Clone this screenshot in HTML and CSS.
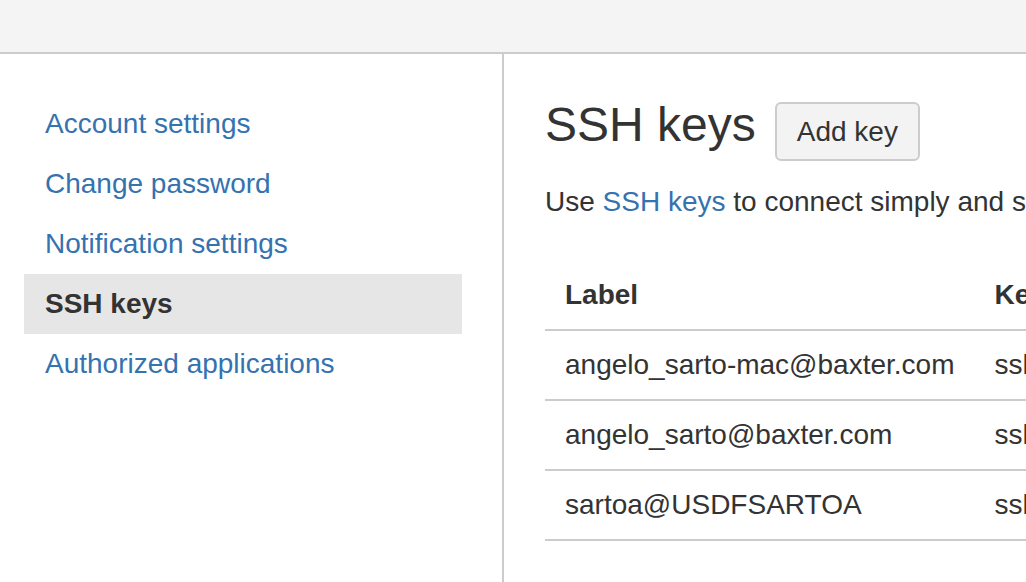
FILE: index.html
```html
<!DOCTYPE html>
<html lang="en">
<head>
<meta charset="utf-8">
<title>SSH keys</title>
<link rel="stylesheet" href="styles.css">
</head>
<body>
<header class="topbar"></header>
<div class="layout">
  <aside class="sidebar">
    <nav class="nav">
      <a class="nav-item" href="#">Account settings</a>
      <a class="nav-item" href="#">Change password</a>
      <a class="nav-item" href="#">Notification settings</a>
      <a class="nav-item active" href="#">SSH keys</a>
      <a class="nav-item" href="#">Authorized applications</a>
    </nav>
  </aside>
  <main class="content">
    <div class="title-row">
      <h1 class="title">SSH keys</h1>
      <button class="btn" type="button">Add key</button>
    </div>
    <p class="intro">Use <a href="#">SSH keys</a> to connect simply and securely to repositories without using passwords.</p>
    <table class="keys">
      <thead>
        <tr><th class="col-label">Label</th><th>Key</th></tr>
      </thead>
      <tbody>
        <tr><td class="col-label">angelo_sarto-mac@baxter.com</td><td>ssh-rsa AAAAB3NzaC1yc2EAAAADAQABAAABAQ</td></tr>
        <tr><td class="col-label">angelo_sarto@baxter.com</td><td>ssh-rsa AAAAB3NzaC1yc2EAAAADAQABAAABAQ</td></tr>
        <tr><td class="col-label">sartoa@USDFSARTOA</td><td>ssh-rsa AAAAB3NzaC1yc2EAAAADAQABAAABAQ</td></tr>
      </tbody>
    </table>
  </main>
</div>
</body>
</html>
```
FILE: styles.css
```css
html, body {
  margin: 0;
  padding: 0;
  height: 100%;
}
body {
  font-family: "Liberation Sans", Arial, Helvetica, sans-serif;
  font-size: 28px;
  color: #333;
  background: #fff;
  overflow: hidden;
}
a {
  color: #3572b0;
  text-decoration: none;
}
.topbar {
  height: 52px;
  background: #f4f4f4;
  border-bottom: 2px solid #ccc;
}
.layout {
  display: flex;
  min-height: calc(100vh - 54px);
}
.sidebar {
  flex: 0 0 504px;
  box-sizing: border-box;
  border-right: 2px solid #ccc;
  padding: 40px 40px 0 24px;
}
.nav {
  display: flex;
  flex-direction: column;
}
.nav-item {
  display: block;
  height: 60px;
  line-height: 60px;
  padding-left: 21px;
  white-space: nowrap;
}
.nav-item.active {
  background: #e6e6e6;
  color: #333;
  font-weight: bold;
}
.content {
  flex: 1;
  min-width: 0;
  overflow: hidden;
  padding: 42px 0 0 41px;
}
.title-row {
  display: flex;
  align-items: baseline;
  gap: 19px;
}
.title {
  margin: 0;
  font-size: 48px;
  font-weight: normal;
  line-height: 1.2;
  white-space: nowrap;
}
.btn {
  font-family: inherit;
  font-size: 28px;
  line-height: 33px;
  color: #333;
  background: #f3f3f3;
  border: 2px solid #ccc;
  border-radius: 6px;
  padding: 11px 20px;
  white-space: nowrap;
}
.intro {
  margin: 24px 0 0;
  line-height: 1.2;
  white-space: nowrap;
}
.keys {
  margin-top: 42px;
  border-collapse: collapse;
  white-space: nowrap;
}
.keys th,
.keys td {
  text-align: left;
  line-height: 34px;
  padding: 17px 20px 17px 20px;
  border-bottom: 2px solid #ccc;
}
.keys th {
  font-weight: bold;
}
.keys .col-label {
  width: 392px;
}
```
